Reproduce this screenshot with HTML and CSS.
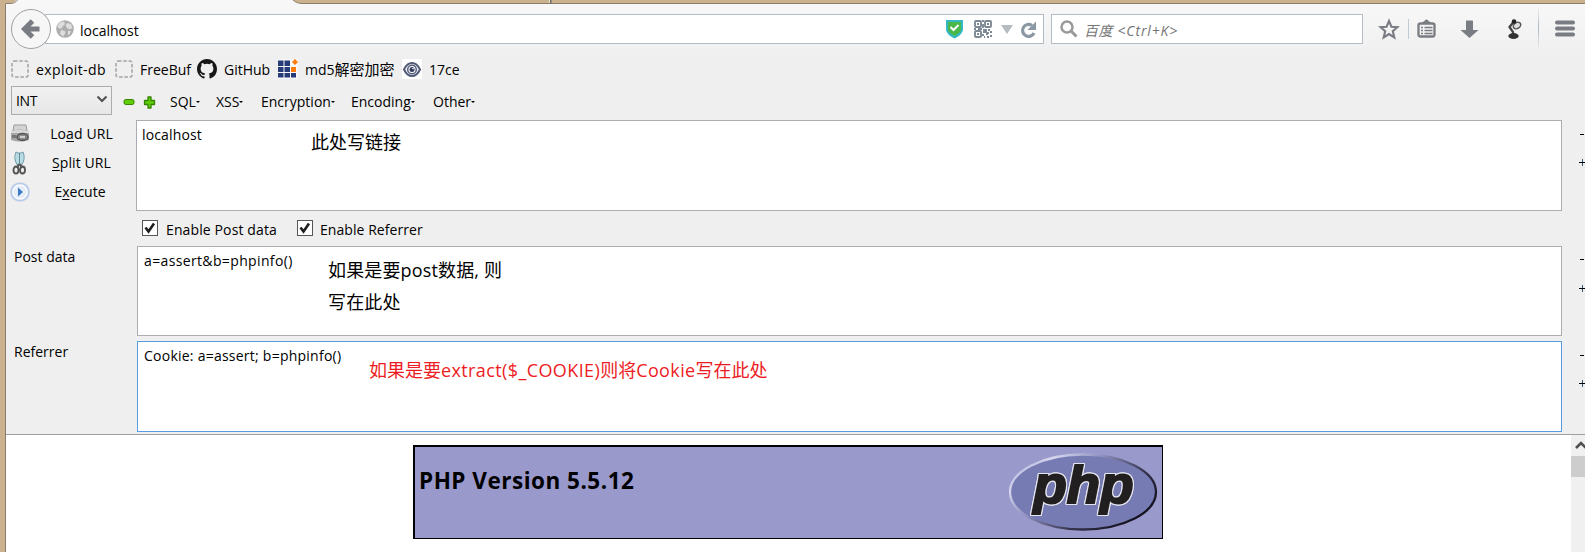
FILE: index.html
```html
<!DOCTYPE html>
<html lang="zh-CN">
<head>
<meta charset="utf-8">
<title>localhost</title>
<link rel="stylesheet" href="styles.css">
</head>
<body>
<div class="frame">
  <div class="tabstrip"><svg width="1585" height="6"><path d="M0 0H16C15 2 13 3 10 3.5H5V6H0ZM293 0C295 2 298 3 301 3.5H1585V0Z" fill="#cbb28e"/><path d="M5.500 6V3.500H10C14 3.500 16 2 17.500 0M293 0C295 2 298 3.500 302 3.500H1585" fill="none" stroke="#8d7d68"/><path d="M549 0h1v3h-1z" fill="#f1e7d7"/><path d="M550 0h1.500v4h-1.500z" fill="#6e6a6a"/></svg></div>
  <div class="window">
    <div class="nav">
      <div class="urlbar">
        <svg class="globe" width="18" height="18" viewBox="0 0 18 18"><circle cx="9" cy="9" r="8.800" fill="#adadad"/><path d="M4 2.500 8 1.500 9 4 6.500 6.500 5 9 2 7.500 1.500 6ZM11 3l4 1 1.500 4-3 1.500L11 8 9.500 5.500ZM5 10l4 1 .5 2L7 16.500 4 14ZM12 11l3 0-1.500 3.500L12 15Z" fill="#dedede"/></svg>
        <span class="t address">localhost</span>
        <span class="grow"></span>
        <svg width="92" height="22" viewBox="0 0 92 22"><path d="M1 2h17v10q-1 5-8.500 8.500Q2 17 1 12Z" fill="#35b8c5"/><path d="M3 4h13v8q-1 3-6.500 6Q4 15 3 12Z" fill="#4ab848"/><path d="m5.500 9 3 3 5-5" fill="none" stroke="#fff" stroke-width="2"/>
        <g transform="translate(29 2)" fill="none" stroke="#7d8994" stroke-width="1.900"><rect x="1" y="1" width="6" height="6" rx="1"/><rect x="11" y="1" width="6" height="6" rx="1"/><rect x="1" y="11" width="6" height="6" rx="1"/><path d="M3 4h2M13 4h2M3 14h2M9 0v2M9 4v4M0 9h2M4 9h4M10 10h2v2h-2zM14 10h2M16 12h2M12 14h2M16 16h2M9 14v2M13 17h2M10 17h1M14 12v2"/></g>
        <path d="M56 7h12l-6 9Z" fill="#b4bbc1"/><path d="M89 15A6 6 0 1 1 87 7.500" fill="none" stroke="#8c98a4" stroke-width="3.200"/><path d="M91 3.500v8.500H82.500Z" fill="#8c98a4"/></svg>
      </div>
      <div class="search"><svg width="18" height="18" viewBox="0 0 18 18" fill="none" stroke="#999"><circle cx="7" cy="7" r="5.500" stroke-width="2.500"/><path d="m11 11 5.500 5.500" stroke-width="3"/></svg><span class="t placeholder"><span class="engine">百度</span> &lt;Ctrl+K&gt;</span></div>
      <svg class="tools" width="216" height="52" viewBox="1369 4 216 52">
        <defs><linearGradient id="sep" x1="0" y1="0" x2="0" y2="1"><stop offset="0" stop-color="#b5c0ca" stop-opacity="0"/><stop offset=".5" stop-color="#a9b6c3"/><stop offset="1" stop-color="#b5c0ca" stop-opacity="0"/></linearGradient></defs>
        <path d="m1389 21 2.400 5.700 6 .5-4.600 4 1.500 6.300-5.300-3.400-5.300 3.400 1.500-6.300-4.600-4 6-.5Z" fill="none" stroke="#797c82" stroke-width="2.100"/>
        <path d="M1408 19h1v20h-1z" fill="#c0cad3"/>
        <rect x="1418.500" y="23.500" width="16" height="13" rx="2" fill="none" stroke="#797c82" stroke-width="2.300"/><path d="M1422 23q0-1.500 2-1.500 1-2 2.500-2t2.500 2q2 0 2 1.500Z" fill="#797c82"/><path d="M1421 27.500h2m1.500 0h8M1421 30.500h2m1.500 0h8M1421 33.500h2m1.500 0h8" stroke="#797c82" stroke-width="1.500"/>
        <path d="M1466 21q0-.5.500-.5h6q.5 0 .5.500v9h5.500l-9 8-9-8h5.500Z" fill="#797c82"/>
        <path d="m1513.500 22-4 5 3.500 5v3" fill="none" stroke="#444" stroke-width="2.300"/><ellipse cx="1517" cy="25.500" rx="4" ry="3" fill="#ddd" stroke="#555" stroke-width="1.500" transform="rotate(-35 1517 25.500)"/><ellipse cx="1513.500" cy="36" rx="5.200" ry="3" fill="#333"/><circle cx="1514" cy="21.500" r="2.300" fill="#222"/>
        <path d="M1538 4h1v48h-1z" fill="url(#sep)"/>
        <path d="M1557 22.500h16M1557 28.500h16M1557 34.500h16" stroke="#797c82" stroke-width="4" stroke-linecap="round"/>
      </svg>
      <svg class="back" width="42" height="42" viewBox="0 0 42 42"><circle cx="21" cy="21" r="19.500" fill="#f6f6f6" stroke="#9da1a4"/><path d="M29.500 21H15M22.500 13l-8 8 8 8" fill="none" stroke="#797c82" stroke-width="5"/></svg>
    </div>
    <div class="bookmarks">
      <svg width="18" height="18"><rect x="1" y="1" width="16" height="16" rx="2" fill="none" stroke="#a2a2a2" stroke-width="1.500" stroke-dasharray="3.500 1.800"/></svg><span class="t exploit">exploit-db</span>
      <svg width="18" height="18"><rect x="1" y="1" width="16" height="16" rx="2" fill="none" stroke="#a2a2a2" stroke-width="1.500" stroke-dasharray="3.500 1.800"/></svg><span class="t freebuf">FreeBuf</span>
      <svg width="20" height="20" viewBox="0 0 16 16"><path fill="#181616" d="M8 0C3.580 0 0 3.580 0 8c0 3.540 2.290 6.530 5.470 7.590.4.070.55-.17.55-.38 0-.19-.01-.82-.01-1.490-2.010.37-2.530-.49-2.690-.94-.09-.23-.48-.94-.82-1.130-.28-.15-.68-.52-.01-.53.63-.01 1.080.58 1.230.82.72 1.210 1.870.87 2.330.66.07-.52.28-.87.51-1.070-1.780-.2-3.640-.89-3.640-3.950 0-.87.31-1.590.82-2.150-.08-.2-.36-1.020.08-2.120 0 0 .67-.21 2.200.82a7.600 7.600 0 0 1 4 0c1.530-1.040 2.200-.82 2.200-.82.44 1.100.16 1.920.08 2.120.51.56.82 1.270.82 2.150 0 3.070-1.870 3.750-3.650 3.950.29.25.54.73.54 1.480 0 1.070-.01 1.930-.01 2.200 0 .21.15.46.55.38A8.010 8.010 0 0 0 16 8c0-4.420-3.580-8-8-8Z"/></svg><span class="t github">GitHub</span>
      <svg width="20" height="20" viewBox="0 0 20 20"><path d="M0 0h20v20H0z" fill="#f8f8f8"/><path d="M0 1.500h5.500V7H0zM6.500 1.500H12V7H6.500zM0 8h5.500v5H0zM6.500 8H12v5H6.500zM0 14h5.500v4.500H0zM6.500 14H12v4.500H6.500zM13 14h5v4.500h-5z" fill="#263b78"/><path d="M13 8h5v5h-5zM17 0l3 3-3 3-3-3Z" fill="#ff7b0b"/></svg><span class="t md5">md5<span class="han">解密加密</span></span>
      <svg width="20" height="20" viewBox="0 0 20 20"><path d="M0 0h20v20H0z" fill="#fff"/><path d="M2 10.500Q5 4 10 4t8 6.500Q15 17 10 17t-8-6.500Z" fill="#eef0f3" stroke="#535b77" stroke-width="2"/><circle cx="10" cy="10.500" r="4.300" fill="#fff" stroke="#59617e" stroke-width="1.500"/><circle cx="10" cy="10.500" r="2.500" fill="#353d63"/><circle cx="11" cy="9.500" r=".8" fill="#fff"/></svg><span class="t ce">17ce</span>
    </div>
    <div class="menubar">
      <div class="select"><span class="t int">INT</span><svg width="12" height="8"><path d="m1.500 1.500 4.500 4.500 4.500-4.500" fill="none" stroke="#505050" stroke-width="2"/></svg></div>
      <svg class="signs" width="34" height="14"><rect x="1" y="4.500" width="10" height="5" rx="1.800" fill="#5fce08" stroke="#358500"/><path d="M25 2h3v3.500h3.500v4H28V13h-3V9.500h-3.500v-4H25Z" fill="#5fce08" stroke="#358500" stroke-linejoin="round" stroke-width="1.300"/></svg>
      <span class="t menu sql">SQL<i></i></span><span class="t menu xss">XSS<i></i></span><span class="t menu enc">Encryption<i></i></span><span class="t menu cod">Encoding<i></i></span><span class="t menu oth">Other<i></i></span>
    </div>
    <div class="field first">
      <div class="actions">
        <div><svg width="20" height="20" viewBox="0 0 20 20"><path d="M4 1h12l1 6H3Z" fill="#d4d4d4" stroke="#999"/><path d="M1 7q9-3 18 0v9q-9 3-18 0Z" fill="#a6a6a6"/><path d="M1 7q9-2 18 0v2H1z" fill="#d8d8d8"/><path d="M2 11h4v3H2z" fill="#777"/><ellipse cx="12.500" cy="13" rx="5.500" ry="3.500" fill="#888" stroke="#555" stroke-width="1.500"/><path d="M10 13h5" stroke="#ddd" stroke-width="1.700"/></svg><span class="t load">Lo<u>a</u>d URL</span></div>
        <div><svg width="20" height="24" viewBox="0 0 20 24"><path d="M6 1q-3 7 1.500 13h4Q16 8 13 1L11 2H8Z" fill="#b8dce6" stroke="#739ba7"/><path d="M9.500 2v11" stroke="#658b98"/><path d="m9 13-2 4M10 13l2 4" stroke="#555" stroke-width="2"/><ellipse cx="6" cy="19" rx="2.500" ry="3.500" fill="none" stroke="#555" stroke-width="1.900"/><ellipse cx="12.500" cy="19" rx="2.500" ry="3.500" fill="none" stroke="#555" stroke-width="1.900"/></svg><span class="t split"><u>S</u>plit URL</span></div>
        <div><svg width="20" height="20" viewBox="0 0 20 20"><circle cx="10" cy="10" r="8.800" fill="#fff" stroke="#b9cde9" stroke-width="2"/><circle cx="10" cy="10" r="6.500" fill="#e5edf7"/><path d="m8 5.500 5 4.500-5 4.500Z" fill="#3c79c7"/></svg><span class="t exec">E<u>x</u>ecute</span></div>
      </div>
      <div class="box"><span class="t v1">localhost</span><span class="note n1">此处写链接</span></div>
      <div class="pm"><b></b><b class="plus"></b></div>
    </div>
    <div class="checks">
      <svg width="16" height="16"><rect x=".5" y=".5" width="15" height="15" fill="#fff" stroke="#555"/><path d="m3.500 7.500 3 4 5.500-8" fill="none" stroke="#1e1e1e" stroke-width="2.600"/></svg><span class="t c1">Enable Post data</span>
      <svg width="16" height="16"><rect x=".5" y=".5" width="15" height="15" fill="#fff" stroke="#555"/><path d="m3.500 7.500 3 4 5.500-8" fill="none" stroke="#1e1e1e" stroke-width="2.600"/></svg><span class="t c2">Enable Referrer</span>
    </div>
    <div class="field second">
      <div class="label"><span class="t l1">Post data</span></div>
      <div class="box"><span class="t v2">a=assert&amp;b=phpinfo()</span><span class="note n2">如果是要post数据, 则<br>写在此处</span></div>
      <div class="pm"><b></b><b class="plus"></b></div>
    </div>
    <div class="field third">
      <div class="label"><span class="t l2">Referrer</span></div>
      <div class="box focus"><span class="t v3">Cookie: a=assert; b=phpinfo()</span><span class="note n3">如果是要<span class="latin">extract($_COOKIE)</span>则将<span class="latin">Cookie</span>写在此处</span></div>
      <div class="pm"><b></b><b class="plus"></b></div>
    </div>
    <div class="page">
      <div class="banner"><span class="version">PHP Version 5.5.12</span>
        <svg width="150" height="80" viewBox="0 0 150 80"><defs><linearGradient id="rim" x1="0" y1="0" x2="1" y2=".65"><stop offset="0" stop-color="#9999cc"/><stop offset=".22" stop-color="#d6d6ee"/><stop offset=".45" stop-color="#9090c0"/><stop offset=".75" stop-color="#34324b"/><stop offset="1" stop-color="#151320"/></linearGradient></defs><ellipse cx="75" cy="40" rx="73" ry="37.500" fill="#777bb4" stroke="url(#rim)" stroke-width="2.300"/><text class="php" x="25.500" y="50.500" textLength="100" lengthAdjust="spacingAndGlyphs">php</text></svg>
      </div>
      <div class="scroll"><svg width="14" height="21"><path d="m5 13 5-5 5 5" fill="none" stroke="#505050" stroke-width="2.500"/></svg><div class="thumb"></div></div>
    </div>
  </div>
</div>
</body>
</html>
```

FILE: styles.css
```css
* { box-sizing: border-box; }
body { margin: 0; overflow: hidden; font: 14px/20px "Open Sans", "Noto Sans CJK SC", sans-serif; color: #000; }
svg { display: block; flex: none; }
.frame { width: 1585px; height: 552px; background: linear-gradient(#f8f8f8, #efefef 60px); border-left: 5px solid #cbb28e; overflow: hidden; }
.tabstrip { height: 4px; margin-left: -5px; }
.window { height: 548px; border-left: 1px solid #8d7d68; }
.t, .note, .version { white-space: nowrap; flex: none; }
.grow { flex: 1; }

.nav { height: 52px; display: flex; align-items: flex-start; position: relative; }
.urlbar { margin: 10px 7px 0 39px; width: 999px; height: 30px; border: 1px solid #b4bdc5; background: #fff; display: flex; align-items: center; padding: 0 6px 0 10px; }
.address { margin-left: 6px; line-height: 28px; padding-top: 3px; }
.search { margin-top: 10px; width: 312px; height: 30px; border: 1px solid #b4bdc5; background: #fff; display: flex; align-items: center; padding-left: 8px; }
.placeholder { font-style: italic; color: #757575; margin-left: 6px; padding-top: 3px; letter-spacing: .85px; }
.engine { letter-spacing: .5px; }
.tools { margin-left: 6px; }
.back { position: absolute; left: 4px; top: 4px; }

.bookmarks { height: 28px; display: flex; align-items: center; padding: 0 0 2px 5px; }
.bookmarks .t { padding: 1px 0 0 7px; }
.exploit { width: 86px; letter-spacing: .4px; }
.freebuf { width: 64px; }
.github { width: 61px; }
.md5 { width: 104px; }
.han { font-size: 15px; line-height: 20px; }

.menubar { height: 36px; display: flex; align-items: center; padding-left: 5px; }
.select { width: 101px; height: 29px; border: 1px solid #acacac; background: linear-gradient(#f1f1f1, #e7e7e7); display: flex; align-items: center; justify-content: space-between; padding: 0 3px 0 4px; margin-bottom: 3px; }
.int { letter-spacing: -.3px; }
.select svg { margin-bottom: 3px; }
.signs { margin: 0 13px 0 11px; }
.menu i { display: inline-block; border: 2.500px solid transparent; border-top-color: #000; border-bottom: 0; vertical-align: 4px; }
.sql { width: 46px; }
.xss { width: 45px; }
.enc { width: 90px; }
.cod { width: 82px; }

.field { display: flex; height: 91px; }
.actions { width: 130px; }
.actions div { height: 29px; display: flex; align-items: center; padding: 0 0 2px 4px; }
.actions .t { width: 102px; text-align: center; padding-left: 1px; letter-spacing: .1px; }
.actions .exec { letter-spacing: 0; padding: 0 2px 0 0; }
.actions u { text-underline-offset: 2px; text-decoration-thickness: 1px; }
.label { width: 131px; padding: 1px 0 0 8px; }
.box { width: 1426px; height: 91px; background: #fff; border: 1px solid #abadb3; display: flex; align-items: flex-start; padding: 5px 0 0 5px; }
.second { height: 95px; }
.second .box { width: 1425px; height: 90px; padding-left: 6px; }
.third { height: 93px; }
.third .box { width: 1425px; padding-left: 6px; }
.box.focus { border-color: #569de5; }
.note { font: 18px/32px "Open Sans", "Noto Sans CJK SC", sans-serif; }
.v1 { width: 169px; margin-top: -1px; letter-spacing: .15px; }
.v2, .v3 { margin-top: -1px; }
.v2 { width: 184px; letter-spacing: .36px; }
.n2 { margin-top: 2px; letter-spacing: .15px; }
.v3 { width: 225px; letter-spacing: .24px; }
.n3 { color: #ed1c24; margin-top: 7px; }
.latin { letter-spacing: .39px; }
.pm { width: 23px; padding: 14px 0 0 17px; }
.pm b { display: block; width: 4px; height: 1px; margin-left: 1px; background: #000; }
.pm .plus { width: 7px; height: 7px; margin: 24px 0 0; background: linear-gradient(#000, #000) 0 3px / 7px 1px no-repeat, linear-gradient(#357, #357) 3px 0 / 1px 7px no-repeat; }
.second .pm { padding-top: 13px; }
.second .plus { margin-top: 25px; }
.checks { height: 35px; display: flex; align-items: center; padding: 0 0 1px 136px; }
.c1 { width: 139px; padding: 3px 0 0 8px; letter-spacing: .12px; }
.c2 { padding: 3px 0 0 7px; letter-spacing: .06px; }

.page { height: 118px; border-top: 1px solid #a0a0a0; background: #fff; display: flex; justify-content: space-between; padding-left: 407px; }
.banner { margin-top: 10px; width: 750px; height: 94px; background: #9999cc; border: solid #000; border-width: 2px 1px 1px 2px; display: flex; justify-content: space-between; padding: 5px 4px 0 4px; }
.version { font: bold 22.500px/58px "Open Sans", sans-serif; letter-spacing: .5px; }
.scroll { width: 14px; background: #f0f0f0; overflow: hidden; }
.thumb { height: 21px; background: #cdcdcd; }
.php { font: italic bold 51px "Liberation Sans", sans-serif; fill: #221f20; stroke: #221f20; stroke-width: 2px; filter: drop-shadow(1px 0 0 #e4e4ee) drop-shadow(-1px 0 0 #e4e4ee) drop-shadow(0 1px 0 #e4e4ee) drop-shadow(0 -1px 0 #e4e4ee); }
```
